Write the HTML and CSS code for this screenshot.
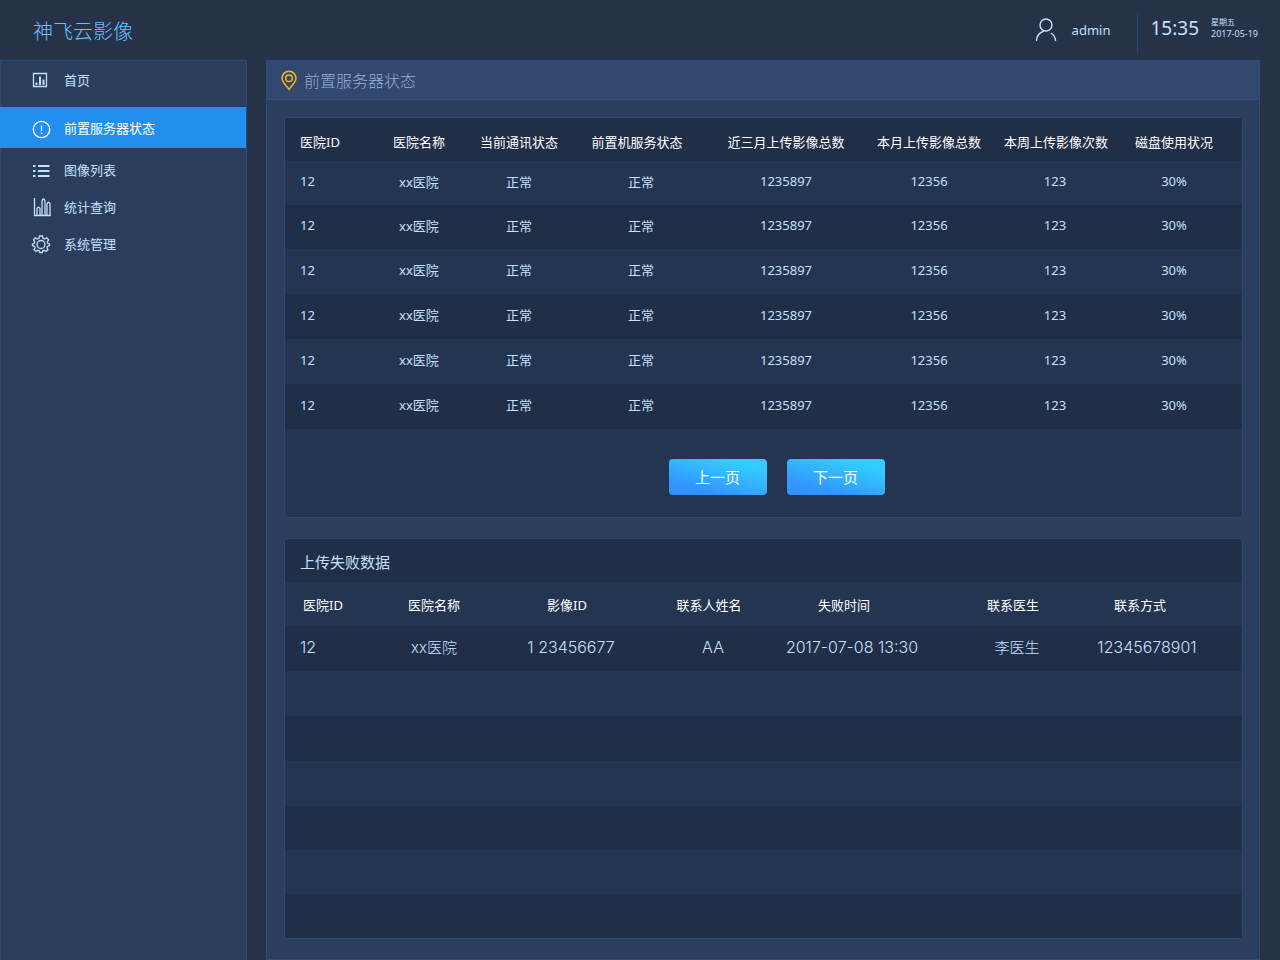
FILE: index.html
```html
<!DOCTYPE html>
<html lang="zh-CN">

<head>
    <meta charset="UTF-8">
    <meta name="viewport" content="width=device-width, initial-scale=1.0">
    <title>神飞云影像</title>
    <link rel="stylesheet" href="styles.css">
</head>

<body>
    <header class="header">
        <h1 class="logo">神飞云影像</h1>
        <div class="user">
            <svg class="user-icon" viewBox="0 0 22 24">
                <circle cx="11" cy="7" r="6" />
                <path d="M9 13 C4.500 14.500 1.500 18 1.500 23 M16 15 C19 17 20.500 20 20.500 23" />
            </svg>
            <span>admin</span>
        </div>
        <div class="clock">
            <span class="time">15:35</span>
            <div class="date">
                <div>星期五</div>
                <div class="day">2017-05-19</div>
            </div>
        </div>
    </header>

    <div class="layout">
        <nav class="sidebar">
            <a href="#">
                <svg viewBox="0 0 18 18">
                    <path d="M1.500 2.500 H14.500 V15.500 H1.500 Z" />
                    <path class="thick" d="M4.500 11.500 V14 M8 5.500 V14 M11.500 8.500 V14" />
                </svg>
                首页
            </a>
            <a href="#" class="active">
                <svg viewBox="0 0 18 18">
                    <circle cx="9.500" cy="10.500" r="8.200" />
                    <path d="M9.500 6.500 V12 M9.500 13.500 V15" />
                </svg>
                前置服务器状态
            </a>
            <a href="#">
                <svg viewBox="0 0 18 18">
                    <path class="thick" d="M1 5 H3.500 M6 5 H17.500 M1 10 H3.500 M6 10 H17.500 M1 15 H3.500 M6 15 H17.500" />
                </svg>
                图像列表
            </a>
            <a href="#">
                <svg viewBox="0 0 18 18">
                    <path d="M2.500 0 V17.500 H19 M5 17 V10.500 Q6.500 8 8 10.500 V17 M10 17 V3 Q11.500 -1 13 3 V17 M15 17 V6 Q16.500 2.500 18 6 V17" />
                </svg>
                统计查询
            </a>
            <a href="#">
                <svg viewBox="0 0 18 18">
                    <path d="M7.500 1 H10.500 L11 3.400 L12.600 4.100 L14.700 2.800 L16.600 4.900 L15.300 6.900 L15.900 8.500 L17.500 9 V10.500 L15.500 11.400 L15 12.900 L16 14.800 L14 16.500 L12.300 15.300 L10.800 15.800 L10.200 17.500 H7.800 L7.200 15.800 L5.700 15.300 L4 16.500 L2 14.700 L3 12.900 L2.500 11.400 L0.500 10.500 V9 L2.200 8.500 L2.800 6.900 L1.500 4.900 L3.400 2.800 L5.400 4.100 L7 3.400 Z" />
                    <circle cx="9" cy="9.500" r="4" />
                </svg>
                系统管理
            </a>
        </nav>

        <main class="main">
            <div class="page-title">
                <svg viewBox="0 0 16 20">
                    <path d="M8 19.300 C6 16 1 12.500 1 8.300 A7 7 0 0 1 15 8.300 C15 12.500 10 16 8 19.300 Z" />
                    <circle cx="8" cy="8.300" r="3.300" />
                </svg>
                <h2>前置服务器状态</h2>
            </div>

            <section class="card">
                <table class="servers">
                    <colgroup>
                        <col class="w-id">
                        <col class="w-name">
                        <col class="w-link">
                        <col class="w-service">
                        <col class="w-quarter">
                        <col class="w-month">
                        <col class="w-week">
                        <col class="w-disk">
                    </colgroup>
                    <thead>
                        <tr>
                            <th>医院ID</th>
                            <th>医院名称</th>
                            <th>当前通讯状态</th>
                            <th>前置机服务状态</th>
                            <th>近三月上传影像总数</th>
                            <th>本月上传影像总数</th>
                            <th>本周上传影像次数</th>
                            <th>磁盘使用状况</th>
                        </tr>
                    </thead>
                    <tbody>
                        <tr>
                            <td>12</td>
                            <td>xx医院</td>
                            <td>正常</td>
                            <td>正常</td>
                            <td>1235897</td>
                            <td>12356</td>
                            <td>123</td>
                            <td>30%</td>
                        </tr>
                        <tr>
                            <td>12</td>
                            <td>xx医院</td>
                            <td>正常</td>
                            <td>正常</td>
                            <td>1235897</td>
                            <td>12356</td>
                            <td>123</td>
                            <td>30%</td>
                        </tr>
                        <tr>
                            <td>12</td>
                            <td>xx医院</td>
                            <td>正常</td>
                            <td>正常</td>
                            <td>1235897</td>
                            <td>12356</td>
                            <td>123</td>
                            <td>30%</td>
                        </tr>
                        <tr>
                            <td>12</td>
                            <td>xx医院</td>
                            <td>正常</td>
                            <td>正常</td>
                            <td>1235897</td>
                            <td>12356</td>
                            <td>123</td>
                            <td>30%</td>
                        </tr>
                        <tr>
                            <td>12</td>
                            <td>xx医院</td>
                            <td>正常</td>
                            <td>正常</td>
                            <td>1235897</td>
                            <td>12356</td>
                            <td>123</td>
                            <td>30%</td>
                        </tr>
                        <tr>
                            <td>12</td>
                            <td>xx医院</td>
                            <td>正常</td>
                            <td>正常</td>
                            <td>1235897</td>
                            <td>12356</td>
                            <td>123</td>
                            <td>30%</td>
                        </tr>
                    </tbody>
                </table>
                <div class="pager">
                    <button type="button">上一页</button>
                    <button type="button">下一页</button>
                </div>
            </section>

            <section class="card">
                <h3>上传失败数据</h3>
                <table class="failed">
                    <colgroup>
                        <col class="f-id">
                        <col class="f-name">
                        <col class="f-image">
                        <col class="f-person">
                        <col class="f-time">
                        <col class="f-doctor">
                        <col class="f-phone">
                    </colgroup>
                    <thead>
                        <tr>
                            <th>医院ID</th>
                            <th>医院名称</th>
                            <th>影像ID</th>
                            <th>联系人姓名</th>
                            <th>失败时间</th>
                            <th>联系医生</th>
                            <th>联系方式</th>
                        </tr>
                    </thead>
                    <tbody>
                        <tr>
                            <td class="num">12</td>
                            <td>xx医院</td>
                            <td class="num">1 23456677</td>
                            <td class="num">AA</td>
                            <td class="num">2017-07-08 13:30</td>
                            <td>李医生</td>
                            <td class="num">12345678901</td>
                        </tr>
                        <!-- 空行 -->
                        <tr><td colspan="7"></td></tr>
                        <tr><td colspan="7"></td></tr>
                        <tr><td colspan="7"></td></tr>
                        <tr><td colspan="7"></td></tr>
                        <tr><td colspan="7"></td></tr>
                        <tr><td colspan="7"></td></tr>
                    </tbody>
                </table>
            </section>
        </main>
    </div>
</body>

</html>
```
FILE: styles.css
```css
* {
    box-sizing: border-box;
}

body {
    margin: 0;
    min-height: 100vh;
    display: flex;
    flex-direction: column;
    background-color: #263248;
    color: #c4e0fd;
    font-family: "Noto Sans", "Noto Sans CJK SC", sans-serif;
    font-size: 13px;
}

h1,
h2,
h3 {
    margin: 0;
    font-weight: 400;
}

svg {
    flex: none;
    fill: none;
    stroke: currentColor;
    overflow: visible;
}

/* 顶部 */
.header {
    display: flex;
    align-items: center;
    height: 60px;
    padding: 0 22px 0 33px;
}

.logo {
    margin-right: auto;
    color: #66c2ff;
    font-size: 20px;
    font-weight: 300;
}

.user {
    display: flex;
    align-items: center;
    gap: 15px;
    padding-right: 27px;
}

.user-icon {
    width: 22px;
    height: 24px;
    stroke-width: 1.4;
}

.clock {
    display: flex;
    align-items: center;
    gap: 12px;
    height: 40px;
    margin-top: 8px;
    padding: 0 0 12px 12px;
    border-left: 1px solid #2a4470;
}

.time {
    font-size: 19px;
}

.date {
    font-size: 8px;
    line-height: 12px;
}

.day {
    font-size: 9px;
}

/* 主体布局 */
.layout {
    flex: 1;
    display: flex;
    gap: 19px;
    padding-right: 20px;
}

.sidebar {
    flex: none;
    width: 247px;
    background-color: #2b3d5c;
    border: 1px solid #2b4a78;
    border-bottom: none;
}

.sidebar a {
    display: flex;
    align-items: center;
    gap: 14px;
    height: 37px;
    padding-left: 31px;
    color: #c4e0fd;
    text-decoration: none;
}

.sidebar svg {
    width: 18px;
    height: 18px;
    stroke-width: 1.3;
}

.sidebar .thick {
    stroke-width: 2;
}

.sidebar .active {
    height: 41px;
    margin: 9px 0 3px -1px;
    padding-left: 32px;
    background-color: #228fee;
    color: #fff;
}

.main {
    flex: 1;
    min-width: 0;
    padding-bottom: 20px;
    background-color: #2c3e5e;
    border: 1px solid #2e4d7c;
}

.page-title {
    display: flex;
    align-items: center;
    gap: 7px;
    height: 39px;
    padding-left: 14px;
    background-color: #33486e;
    border-bottom: 1px solid #2f5183;
    color: #8fb0da;
}

.page-title svg {
    width: 16px;
    height: 20px;
    stroke: #f9b41c;
    stroke-width: 1.5;
}

.page-title h2 {
    font-size: 16px;
    font-weight: 300;
}

/* 表格卡片 */
.card {
    margin: 17px 16px 0 17px;
    border: 1px solid #2b4876;
    border-radius: 4px;
    background-color: #243552;
    overflow: hidden;
}

.card + .card {
    margin-top: 20px;
}

.card h3 {
    height: 43px;
    padding: 3px 15px 0;
    background-color: #212e47;
    font-size: 15px;
    line-height: 40px;
}

table {
    width: 100%;
    table-layout: fixed;
    border-collapse: collapse;
}

th,
td {
    padding: 0;
    text-align: center;
    white-space: nowrap;
}

th {
    color: #fff;
    font-weight: 400;
}

td {
    height: 45px;
    padding-bottom: 4px;
}

th:first-child,
td:first-child {
    padding-left: 15px;
    text-align: left;
}

.servers th {
    height: 43px;
    padding-top: 4px;
}

.servers th:nth-child(4) {
    padding-right: 8px;
}

.servers tr:nth-child(-n+2) td {
    height: 44px;
}

.servers thead,
.servers tbody tr:nth-child(even),
.failed tbody tr:nth-child(odd) {
    background-color: #212e47;
}

.w-id { width: 79px; }
.w-name { width: 110px; }
.w-link { width: 90px; }
.w-service { width: 154px; }
.w-quarter { width: 136px; }
.w-month { width: 150px; }
.w-week { width: 102px; }
.w-disk { width: 136px; }

.f-id { width: 91px; }
.f-name { width: 116px; }
.f-image { width: 158px; }
.f-person { width: 126px; }
.f-time { width: 152px; }
.f-doctor { width: 156px; }
.f-phone { width: 158px; }

.failed th {
    height: 44px;
    padding-right: 8px;
}

.failed th:first-child {
    padding-left: 18px;
}

.failed th:nth-child(2) {
    padding-right: 0;
}

.failed th:nth-child(5) {
    padding-right: 16px;
}

.failed td {
    font-family: Inter, "Noto Sans CJK SC", sans-serif;
    font-size: 15px;
    font-weight: 300;
}

.failed .num {
    font-size: 16px;
}

.failed tr:nth-last-child(-n+3) td {
    height: 44px;
}

.failed th:nth-child(6),
.failed td:nth-child(6) {
    padding-left: 22px;
}

.failed td:nth-child(7) {
    padding-right: 32px;
}

.failed th:nth-child(7) {
    padding-right: 46px;
}

.pager {
    display: flex;
    justify-content: center;
    gap: 20px;
    padding: 30px 0 22px 26px;
}

button {
    width: 98px;
    height: 36px;
    padding: 0 0 2px;
    border: none;
    border-radius: 4px;
    background: linear-gradient(15deg, #3393ff 20%, #33ccff 80%);
    color: #fff;
    font-family: inherit;
    font-size: 15px;
    cursor: pointer;
}

button:hover {
    opacity: 0.9;
}
```
